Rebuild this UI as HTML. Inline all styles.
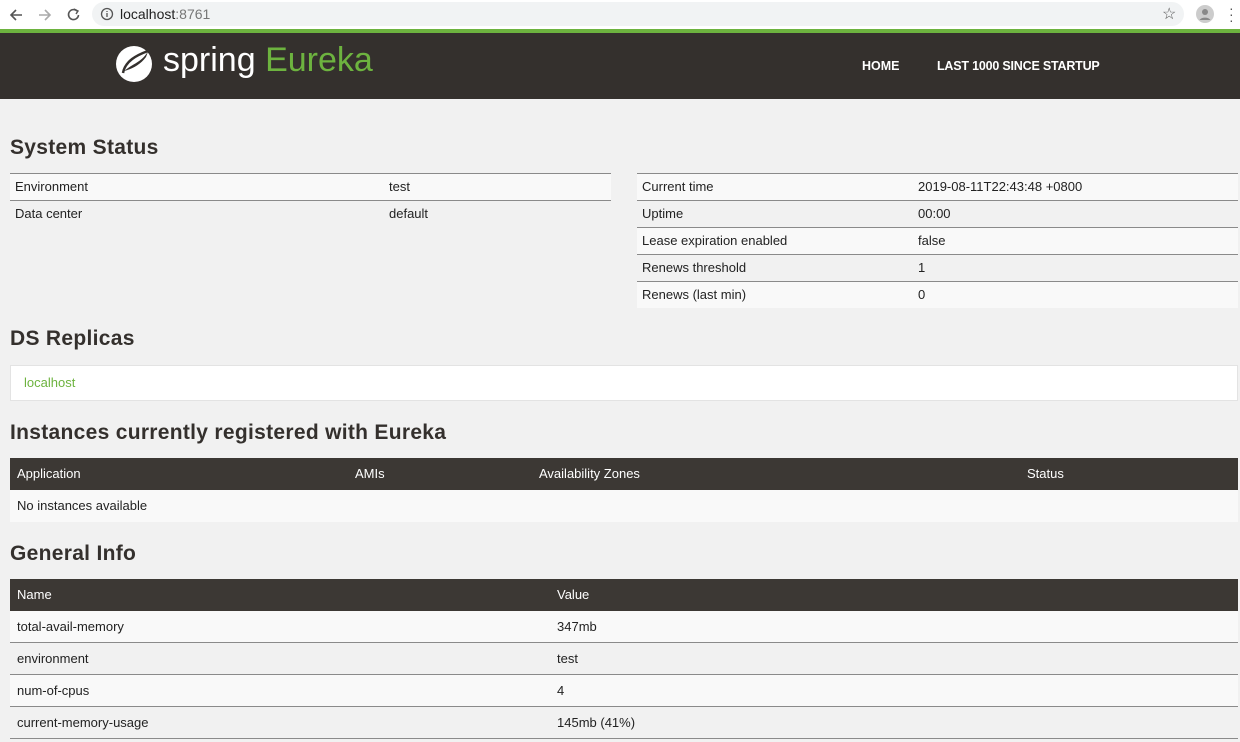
<!DOCTYPE html>
<html><head><meta charset="utf-8"><style>
*{margin:0;padding:0;box-sizing:border-box}
body{width:1240px;height:742px;overflow:hidden;background:#f1f1f1;font-family:"Liberation Sans",sans-serif;color:#222;position:relative;font-size:13px}
.a{position:absolute}
.chrome{left:0;top:0;width:1240px;height:30px;background:#fff}
.url{left:92px;top:2px;width:1092px;height:24px;background:#f1f3f4;border-radius:12px}
.green{left:0;top:29px;width:1240px;height:4px;background:#6db33f}
.nav{left:0;top:33px;width:1240px;height:66px;background:#34302d}
h2{position:absolute;font-size:21px;font-weight:bold;color:#34302d;letter-spacing:0.3px}
.row{position:absolute;height:27px;border-top:1px solid #8a8a8a;line-height:26px;font-size:13px}
.row span{position:absolute;left:5px}
.light{background:#f9f9f9}
.th{position:absolute;height:32px;background:#3c3834;color:#fff;line-height:31px;font-size:13px}
.th span,.r2 span{position:absolute}
.r2{position:absolute;height:32px;line-height:31px;border-bottom:1px solid #8a8a8a}
</style></head><body>
<div class="a chrome"></div>
<svg class="a" style="left:8px;top:6px" width="80" height="18" viewBox="0 0 80 18"><path d="M14 9H3M8 4L3 9l5 5" stroke="#555" stroke-width="1.6" fill="none"/><path d="M31 9h11M37 4l5 5-5 5" stroke="#aaa" stroke-width="1.6" fill="none"/><path d="M69 5a5 5 0 1 0 1.5 4" stroke="#555" stroke-width="1.6" fill="none"/><path d="M66 3l4 2-2 3" stroke="#555" stroke-width="1.4" fill="none"/></svg>
<div class="a url"></div>
<svg class="a" style="left:100px;top:7px" width="14" height="14"><circle cx="7" cy="7" r="5.5" stroke="#555" stroke-width="1.3" fill="none"/><path d="M7 6v4M7 4v1" stroke="#555" stroke-width="1.3"/></svg>
<div class="a" style="left:120px;top:6px;font-size:14px;color:#222">localhost<span style="color:#777">:8761</span></div>
<div class="a" style="left:1162px;top:4px;font-size:16px;color:#555">☆</div>
<svg class="a" style="left:1196px;top:5px" width="18" height="18"><circle cx="9" cy="9" r="9" fill="#ccc"/><circle cx="9" cy="7" r="3" fill="#888"/><path d="M3.5 15a6 4 0 0 1 11 0" fill="#888"/></svg>
<div class="a" style="left:1229px;top:5px;width:3px;font-size:14px;color:#555;line-height:6px">·<br>·<br>·</div>
<div class="a green"></div>
<div class="a nav"></div>
<svg class="a" style="left:114px;top:43px" width="42" height="40" viewBox="0 0 42 40"><circle cx="20" cy="21" r="18" fill="#fff"/><path d="M35 6C30 18 20 20 10 28c8-2 16-6 22-14" fill="#34302d"/><path d="M9 30c2-12 14-18 25-22" stroke="#34302d" stroke-width="2.5" fill="none"/></svg>
<div class="a" style="left:163px;top:41px;font-size:34px;color:#fff;letter-spacing:0px">spring <span style="color:#6db33f">Eureka</span></div>
<div class="a" style="left:862px;top:59px;color:#fff;font-weight:bold;font-size:12.5px">HOME</div>
<div class="a" style="left:937px;top:59px;color:#fff;font-weight:bold;font-size:12.5px;letter-spacing:-0.2px">LAST 1000 SINCE STARTUP</div>

<h2 style="left:10px;top:136px">System Status</h2>
<div class="row light" style="left:10px;top:173px;width:601px"><span>Environment</span><span style="left:379px">test</span></div>
<div class="row" style="left:10px;top:200px;width:601px"><span>Data center</span><span style="left:379px">default</span></div>

<div class="row light" style="left:637px;top:173px;width:601px"><span>Current time</span><span style="left:281px">2019-08-11T22:43:48 +0800</span></div>
<div class="row" style="left:637px;top:200px;width:601px"><span>Uptime</span><span style="left:281px">00:00</span></div>
<div class="row light" style="left:637px;top:227px;width:601px"><span>Lease expiration enabled</span><span style="left:281px">false</span></div>
<div class="row" style="left:637px;top:254px;width:601px"><span>Renews threshold</span><span style="left:281px">1</span></div>
<div class="row light" style="left:637px;top:281px;width:601px"><span>Renews (last min)</span><span style="left:281px">0</span></div>

<h2 style="left:10px;top:327px">DS Replicas</h2>
<div class="a" style="left:10px;top:365px;width:1228px;height:36px;background:#fff;border:1px solid #e3e3e3"></div>
<div class="a" style="left:24px;top:375px;color:#6db33f">localhost</div>

<h2 style="left:10px;top:421px">Instances currently registered with Eureka</h2>
<div class="th" style="left:10px;top:458px;width:1228px"><span style="left:7px">Application</span><span style="left:345px">AMIs</span><span style="left:529px">Availability Zones</span><span style="left:1017px">Status</span></div>
<div class="a light" style="left:10px;top:490px;width:1228px;height:32px;line-height:31px"><span style="padding-left:7px">No instances available</span></div>

<h2 style="left:10px;top:542px">General Info</h2>
<div class="th" style="left:10px;top:579px;width:1228px"><span style="left:7px">Name</span><span style="left:547px">Value</span></div>
<div class="r2 light" style="left:10px;top:611px;width:1228px"><span style="left:7px">total-avail-memory</span><span style="left:547px">347mb</span></div>
<div class="r2" style="left:10px;top:643px;width:1228px"><span style="left:7px">environment</span><span style="left:547px">test</span></div>
<div class="r2 light" style="left:10px;top:675px;width:1228px"><span style="left:7px">num-of-cpus</span><span style="left:547px">4</span></div>
<div class="r2" style="left:10px;top:707px;width:1228px"><span style="left:7px">current-memory-usage</span><span style="left:547px">145mb (41%)</span></div>
</body></html>
